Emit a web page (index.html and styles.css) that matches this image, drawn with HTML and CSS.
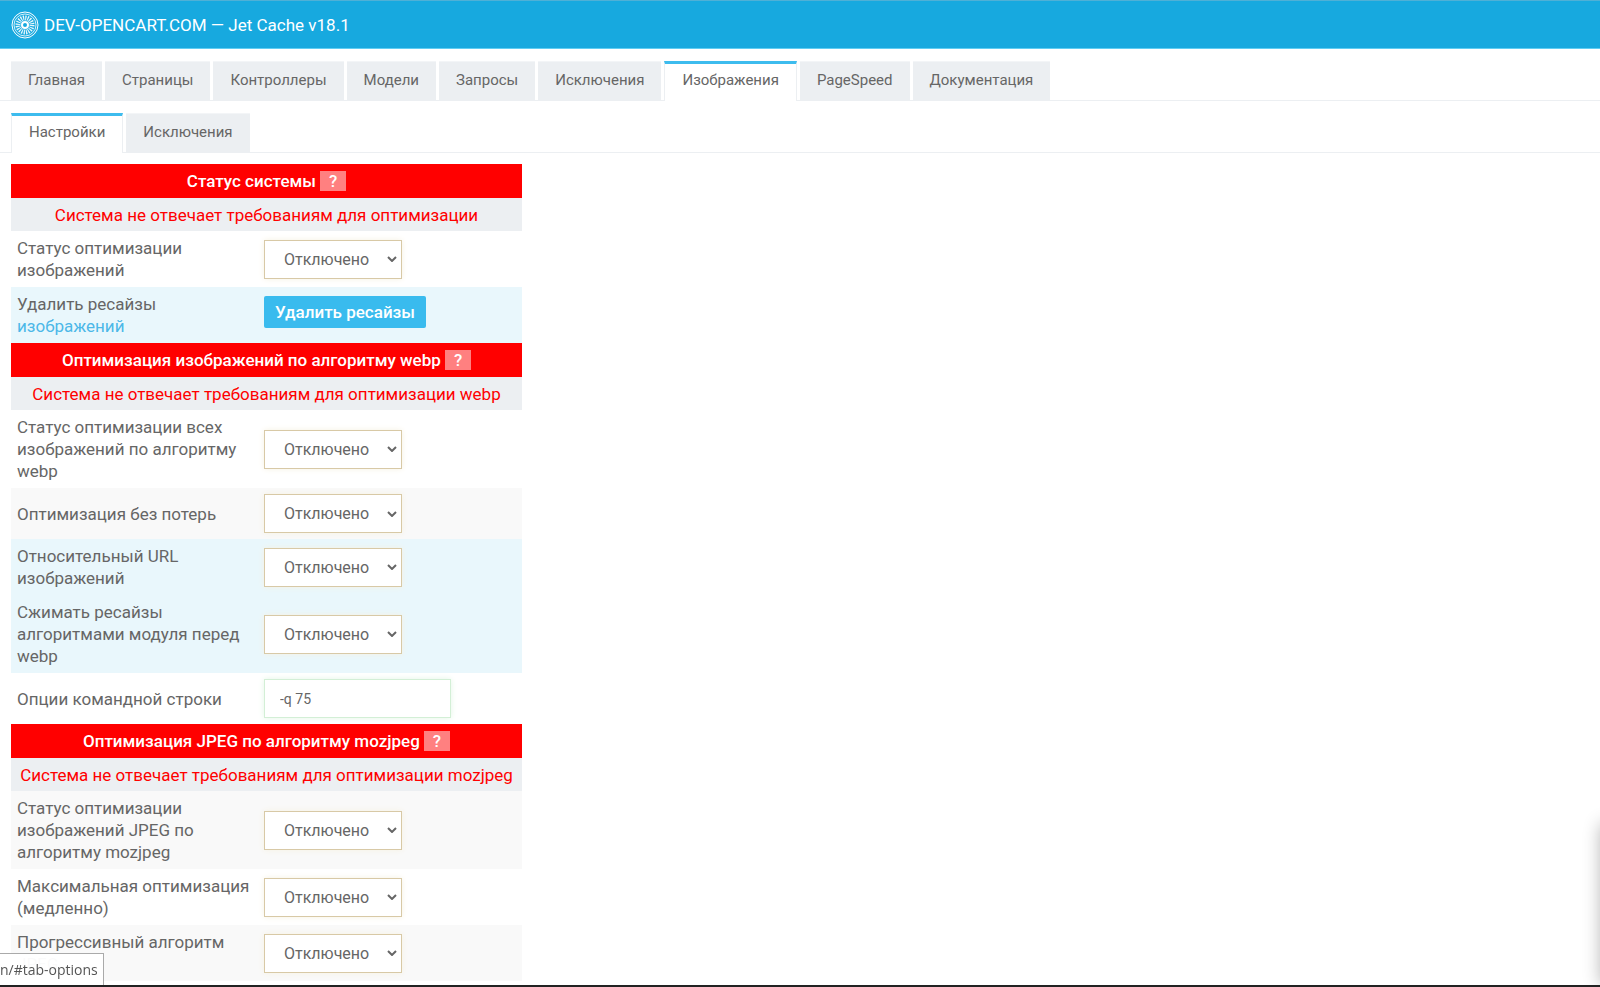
FILE: index.html
```html
<!DOCTYPE html>
<html lang="ru">
<head>
<meta charset="UTF-8">
<title>Jet Cache</title>
<link rel="stylesheet" href="styles.css">
</head>
<body>
<header class="topbar">
	<svg class="logo" viewBox="0 0 28 28" fill="none" stroke="#fff">
		<circle cx="14" cy="14" r="13" stroke-width="1"/>
		<circle cx="14" cy="14" r="11" stroke-width="1" opacity=".8"/>
		<circle cx="14" cy="14" r="7" stroke-width="5" stroke-dasharray="1.2 1" opacity=".9"/>
		<circle cx="14" cy="14" r="3" stroke-width="2"/>
	</svg>
	<h1>DEV-OPENCART.COM — Jet Cache v18.1</h1>
</header>

<nav class="tabs">
	<a href="#tab-general">Главная</a>
	<a href="#tab-pages">Страницы</a>
	<a href="#tab-controllers">Контроллеры</a>
	<a href="#tab-models">Модели</a>
	<a href="#tab-queries">Запросы</a>
	<a href="#tab-exceptions">Исключения</a>
	<a href="#tab-images" class="active">Изображения</a>
	<a href="#tab-pagespeed">PageSpeed</a>
	<a href="#tab-docs">Документация</a>
</nav>

<nav class="tabs">
	<a href="#tab-options" class="active">Настройки</a>
	<a href="#tab-images-ex">Исключения</a>
</nav>

<main class="content">
<table class="options">
	<tr class="head">
		<th colspan="2">Статус системы <button type="button" class="help">?</button></th>
	</tr>
	<tr class="warn">
		<td colspan="2">Система не отвечает требованиям для оптимизации</td>
	</tr>
	<tr>
		<td class="name"><label for="image_status">Статус оптимизации изображений</label></td>
		<td><select id="image_status"><option>Отключено</option><option>Включено</option></select></td>
	</tr>
	<tr class="blue">
		<td class="name">Удалить ресайзы <a href="#images">изображений</a></td>
		<td><button type="button" class="btn">Удалить ресайзы</button></td>
	</tr>

	<tr class="head">
		<th colspan="2">Оптимизация изображений по алгоритму webp <button type="button" class="help">?</button></th>
	</tr>
	<tr class="warn">
		<td colspan="2">Система не отвечает требованиям для оптимизации webp</td>
	</tr>
	<tr>
		<td class="name"><label for="webp_status">Статус оптимизации всех изображений по алгоритму webp</label></td>
		<td><select id="webp_status"><option>Отключено</option><option>Включено</option></select></td>
	</tr>
	<tr class="odd">
		<td class="name"><label for="webp_lossless">Оптимизация без потерь</label></td>
		<td><select id="webp_lossless"><option>Отключено</option><option>Включено</option></select></td>
	</tr>
	<tr class="blue">
		<td class="name"><label for="webp_url">Относительный URL изображений</label></td>
		<td><select id="webp_url"><option>Отключено</option><option>Включено</option></select></td>
	</tr>
	<tr class="blue">
		<td class="name"><label for="webp_resize">Сжимать ресайзы алгоритмами модуля перед webp</label></td>
		<td><select id="webp_resize"><option>Отключено</option><option>Включено</option></select></td>
	</tr>
	<tr>
		<td class="name"><label for="webp_command">Опции командной строки</label></td>
		<td><input type="text" id="webp_command" value="-q 75"></td>
	</tr>

	<tr class="head">
		<th colspan="2">Оптимизация JPEG по алгоритму mozjpeg <button type="button" class="help">?</button></th>
	</tr>
	<tr class="warn">
		<td colspan="2">Система не отвечает требованиям для оптимизации mozjpeg</td>
	</tr>
	<tr class="odd">
		<td class="name"><label for="jpeg_status">Статус оптимизации изображений JPEG по алгоритму mozjpeg</label></td>
		<td><select id="jpeg_status"><option>Отключено</option><option>Включено</option></select></td>
	</tr>
	<tr>
		<td class="name"><label for="jpeg_max">Максимальная оптимизация (медленно)</label></td>
		<td><select id="jpeg_max"><option>Отключено</option><option>Включено</option></select></td>
	</tr>
	<tr class="odd">
		<td class="name"><label for="jpeg_progressive">Прогрессивный алгоритм JPEG</label></td>
		<td><select id="jpeg_progressive"><option>Отключено</option><option>Включено</option></select></td>
	</tr>
</table>
</main>

<aside class="side-panel"></aside>
<div class="status-link">n/#tab-options</div>
<div class="bottom-line"></div>
</body>
</html>
```
FILE: styles.css
```css
body{
	margin: 0;
	font-family: Roboto, "Liberation Sans", sans-serif;
	font-size: 17px;
	line-height: 22px;
	color: #666;
	background-color: #fff;
}
.topbar{
	display: flex;
	align-items: center;
	gap: 5px;
	height: 49px;
	padding: 0 11px;
	box-sizing: border-box;
	border-top: 1px solid #4fb0d6;
	border-bottom: 1px solid #5fcdf3;
	background-color: #17a9df;
	color: #fff;
}
.topbar h1{
	margin: 0;
	font-size: 17px;
	font-weight: 400;
}
.logo{
	width: 28px;
	height: 28px;
}

/* tabs */
.tabs{
	display: flex;
	gap: 3px;
	margin-top: 12px;
	padding: 0 11px;
	border-bottom: 1px solid #eceff2;
}
.tabs a{
	padding: 8px 17px 10px;
	margin-bottom: -1px;
	border-top: 1px solid #f3f5f7;
	background-color: #eceff2;
	color: #666;
	font-size: 15px;
	line-height: 21px;
	text-decoration: none;
}
.tabs a.active{
	padding: 6px 17px 10px;
	border: 1px solid #eceff2;
	border-top: 3px solid #3dbcee;
	border-bottom: none;
	background-color: #fff;
}

/* options table */
.content{
	padding: 11px;
}
.options{
	width: 511px;
	border-collapse: collapse;
}
.options td{
	padding: 6px;
}
.options .name{
	width: 235px;
}
.options .name a{
	color: #4cb8e8;
	text-decoration: none;
}
.options .head th{
	height: 34px;
	padding: 0;
	background-color: #f00;
	color: #fff;
	font-weight: 500;
}
.options .warn td{
	height: 33px;
	padding: 0;
	background-color: #eceff2;
	color: #f00;
	text-align: center;
}
.blue{
	background-color: #e9f7fc;
}
.odd{
	background-color: #f9f9f9;
}
.help{
	width: 26px;
	height: 20px;
	padding: 0;
	border: none;
	background-color: #ff8080;
	color: #fff;
	font: 500 17px Roboto, sans-serif;
	line-height: 20px;
}
.btn{
	display: block;
	height: 32px;
	margin-bottom: 6px;
	padding: 0 11px;
	border: none;
	border-radius: 2px;
	background-color: #39bbee;
	color: #fff;
	font: 500 17px Roboto, sans-serif;
}
select, input{
	display: block;
	box-sizing: border-box;
	height: 39px;
	background-color: #fff;
	color: #666;
	font-family: Roboto, sans-serif;
}
select{
	width: 138px;
	padding: 0 0 0 19px;
	border: 1px solid #d8c9a6;
	border-radius: 0;
	box-shadow: 0 0 6px #f6f1e2;
	font-size: 16px;
	appearance: none;
	background-image: url("data:image/svg+xml,%3Csvg xmlns='http://www.w3.org/2000/svg' width='10' height='6' fill='none' stroke='%23666' stroke-width='2'%3E%3Cpath d='M1 1l4 4 4-4'/%3E%3C/svg%3E");
	background-repeat: no-repeat;
	background-position: right 4px center;
}
input{
	width: 187px;
	padding: 0 15px;
	border: 1px solid #d3efd6;
	box-shadow: 0 0 6px #e3f6e5;
	font-size: 14px;
}

/* hidden panel, only its shadow is seen */
.side-panel{
	position: fixed;
	top: 824px;
	right: -41px;
	bottom: 2px;
	width: 40px;
	box-shadow: 0 0 18px rgba(0,0,0,.3);
}
.status-link{
	position: fixed;
	left: 0;
	bottom: 2px;
	width: 104px;
	height: 32px;
	box-sizing: border-box;
	border-top: 1px solid #aaa;
	border-right: 1px solid #aaa;
	background-color: rgba(255,255,255,.97);
	color: #555;
	font: 14px "Open Sans", sans-serif;
	line-height: 32px;
	white-space: nowrap;
}
.bottom-line{
	position: fixed;
	left: 0;
	right: 0;
	bottom: 0;
	height: 2px;
	background-color: #222;
}
```
